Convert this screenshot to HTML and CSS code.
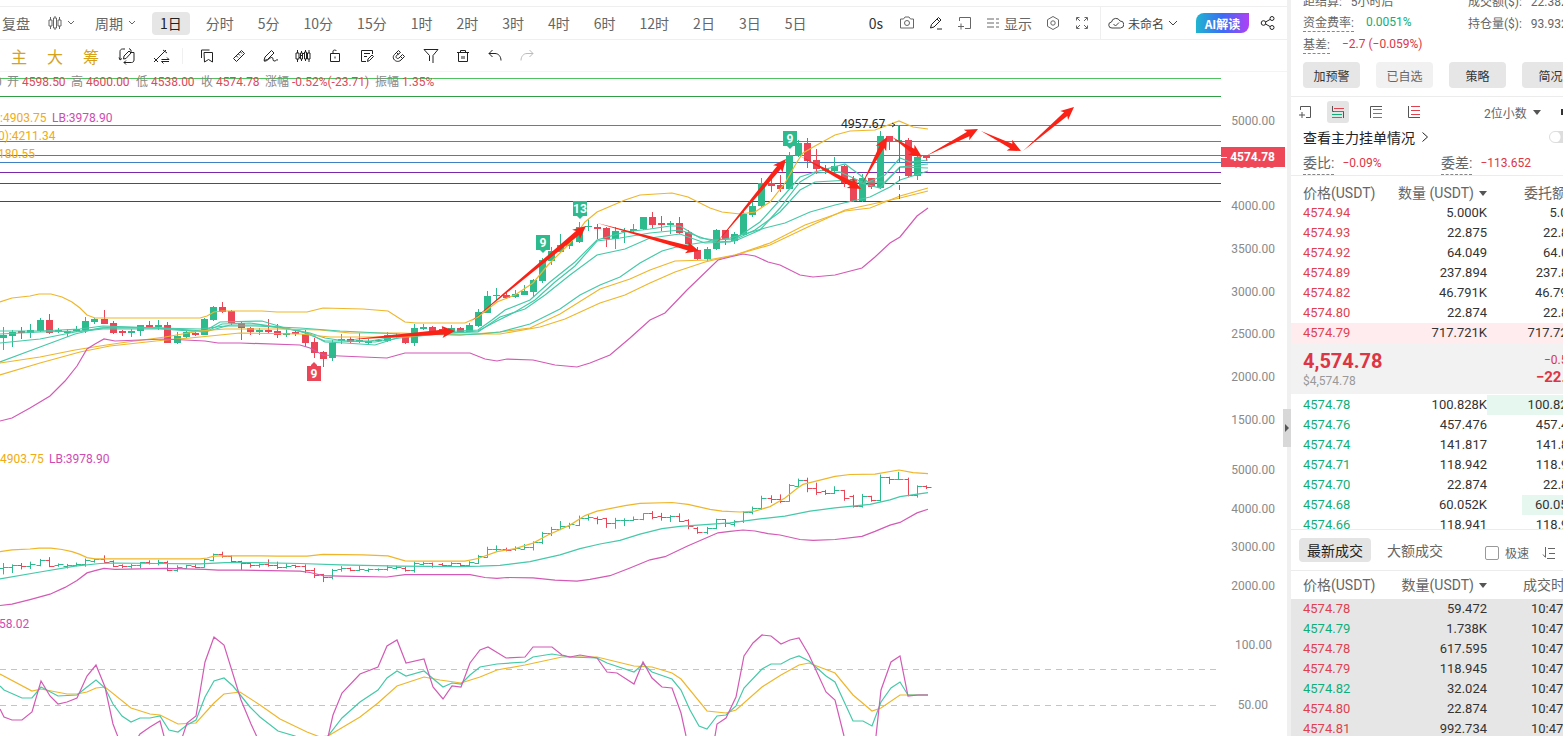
FILE: index.html
```html
<!DOCTYPE html>
<html lang="zh-CN">
<head>
    <meta charset="utf-8">
    <title>ETH/USDT 1日 K线</title>
    <link rel="stylesheet" href="styles.css">
</head>

<body>
    <main class="workspace">
        <div class="toolbar periods">
            <button class="tb replay">复盘</button>
            <button class="tb kline">
                <svg width="14" height="16" viewBox="0 0 14 16"><path d="M2.500 2v3M2.500 11v3M1 5h3v6H1zM7 1v2M7 13v2M5.500 3h3v10h-3zM11.500 2v3M11.500 11v3M10 5h3v6h-3z"/></svg>
                <svg class="chev" width="8" height="6" viewBox="0 0 8 6"><path d="M1 1l3 3 3-3"/></svg>
            </button>
            <button class="tb cycle">周期
                <svg class="chev" width="8" height="6" viewBox="0 0 8 6"><path d="M1 1l3 3 3-3"/></svg>
            </button>
            <button class="tb active">1日</button>
            <button class="tb">分时</button>
            <button class="tb">5分</button>
            <button class="tb">10分</button>
            <button class="tb">15分</button>
            <button class="tb">1时</button>
            <button class="tb">2时</button>
            <button class="tb">3时</button>
            <button class="tb">4时</button>
            <button class="tb">6时</button>
            <button class="tb">12时</button>
            <button class="tb">2日</button>
            <button class="tb">3日</button>
            <button class="tb">5日</button>
            <div class="tools">
                <span class="delay">0s</span>
                <button class="icon" aria-label="截图"><svg width="16" height="16" viewBox="0 0 16 16"><path d="M1.500 4h3l1.500-2h4l1.500 2h3v9h-13z"/><circle cx="8" cy="8" r="2.500"/></svg></button>
                <button class="icon dark" aria-label="画线"><svg width="16" height="16" viewBox="0 0 16 16"><path d="M2.500 13l1-3.500L10.500 2.500l2.500 2.500L6 12zM9 4l2.500 2.500M9 14h5"/></svg></button>
                <button class="icon" aria-label="添加"><svg width="16" height="16" viewBox="0 0 16 16"><path d="M2.500 6V2.500h11v11H8M4 8.500v6M1 11.500h6"/></svg></button>
                <button class="show">
                    <svg width="14" height="16" viewBox="0 0 14 16"><path d="M1 4h7M1 8h7M1 12h7M10 4h3M10 8h3M10 12h3"/></svg>显示
                </button>
                <button class="icon" aria-label="设置"><svg width="16" height="16" viewBox="0 0 16 16"><path d="M8 1.500l5.500 3.200v6.600L8 14.500l-5.500-3.200V4.700z"/><circle cx="8" cy="8" r="2.200"/></svg></button>
                <button class="icon" aria-label="全屏"><svg width="16" height="16" viewBox="0 0 16 16"><path d="M2.500 5.500v-3h3M10.500 2.500h3v3M13.500 10.500v3h-3M5.500 13.500h-3v-3M3 3l3 3M13 3l-3 3M13 13l-3-3M3 13l3-3"/></svg></button>
            </div>
            <div class="account">
                <button class="layout">
                    <svg width="16" height="14" viewBox="0 0 16 14"><path d="M4 12a3 3 0 0 1-.5-6A4.500 4.500 0 0 1 12 5a3.500 3.500 0 0 1 .5 7zM5.500 8l2 2 3.500-3.500"/></svg>未命名
                    <svg class="chev" width="10" height="6" viewBox="0 0 10 6"><path d="M1 1l4 4 4-4"/></svg>
                </button>
                <button class="ai">AI解读</button>
                <button class="icon dark" aria-label="分享"><svg width="16" height="16" viewBox="0 0 16 16"><circle cx="3.500" cy="8" r="2.300"/><circle cx="12" cy="3.500" r="2"/><circle cx="12" cy="12.500" r="2"/><path d="M5.500 7L10 4.500M5.500 9l4.500 2.500"/></svg></button>
            </div>
        </div>

        <div class="toolbar drawing">
            <button class="gold">主</button>
            <button class="gold">大</button>
            <button class="gold">筹</button>
            <button class="icon wide dark" aria-label="指标"><svg width="18" height="18" viewBox="0 0 18 18"><path d="M7 2H4.500C3 2 2 3 2 4.500V12M1 10.500l1 2.500 2-1.500M6 15.500h7.500c1.500 0 2.500-1 2.500-2.500V5.500h-3M11 1.500l2 1.500v2M8 13.500l-2 2 2 2M5.500 12l.5-3L11 4l2 2-5 5.500z"/></svg></button>
            <button class="icon dark" aria-label="比较"><svg width="18" height="18" viewBox="0 0 18 18"><path d="M2 15L14 3M2 11l4 4M11 3l4 3M9.500 12.500H17l-2-2M17 14.500H9.500l2 2"/></svg></button>
            <span class="sep"></span>
            <button class="icon dark" aria-label="复制"><svg width="16" height="16" viewBox="0 0 16 16"><path d="M5 4.500h8.500v9.500l-4-2.500-4 2.500zM2.500 10V2h8"/></svg></button>
            <button class="icon dark" aria-label="测量"><svg width="16" height="16" viewBox="0 0 16 16"><path d="M2.500 10.500l8-8 3 3-8 8zM5.500 8l1.500 1.500M7.500 6l1.500 1.500M9.500 4l1.500 1.500"/></svg></button>
            <button class="icon dark" aria-label="画笔"><svg width="18" height="16" viewBox="0 0 18 16"><path d="M2 12.500l1-3.500 6.500-6.500L12 5l-6.500 6.500zM2 13c3 1 6-4 8-3.500s0 3 2 3.500 2-2 4-1"/></svg></button>
            <button class="icon dark" aria-label="形态"><svg width="16" height="16" viewBox="0 0 16 16"><path d="M2.500 2v3M2.500 11v3M1 5h3v6H1zM6.500 3v2M6.500 11v2M5.500 5h2v6h-2zM10.500 2v2M10.500 11v2M9.500 4h2v7h-2zM14 2v3M14 11v3M12.500 5H15v6h-2.500zM4 10l5-5"/></svg></button>
            <button class="icon dark" aria-label="锁定"><svg width="16" height="16" viewBox="0 0 16 16"><path d="M3.500 5.500h9v8h-9zM6 5.500V3c0-1 3-1.500 3.500 0M8 8.500v2"/></svg></button>
            <button class="icon dark" aria-label="笔记"><svg width="16" height="16" viewBox="0 0 16 16"><path d="M13.500 6V2.500h-11v11H7M5 5.500h6M5 8.500h3M8.500 13.500l.5-2.500 4-4 1.500 1.500-4 4z"/></svg></button>
            <button class="icon dark" aria-label="磁吸"><svg width="16" height="16" viewBox="0 0 16 16"><path d="M7.500 2.500l-4 4c-4 4 2.500 9.500 6.500 5.500l3.500-3.500-2-2L8 10c-1.500 1.500-4-.5-2.500-2.500L9.500 4.500zM5.500 4.500l2 2M9.500 8.500l2 2"/></svg></button>
            <button class="icon dark" aria-label="筛选"><svg width="16" height="16" viewBox="0 0 16 16"><path d="M1 1.500h14L10 7.500V15M1 1.500l5.500 6V13"/></svg></button>
            <button class="icon dark" aria-label="删除"><svg width="16" height="16" viewBox="0 0 16 16"><path d="M2 4.500h12M5.500 4.500v-2h5v2M3.500 4.500v9h9v-9M7 8v3M9 8v3"/></svg></button>
            <button class="icon dark" aria-label="撤销"><svg width="16" height="16" viewBox="0 0 16 16"><path d="M5.500 2L2 5.500 5.500 9M2 5.500h6c3.500 0 6 3 6 7"/></svg></button>
            <button class="icon faded" aria-label="重做"><svg width="16" height="16" viewBox="0 0 16 16"><path d="M10.500 2L14 5.500 10.500 9M14 5.500H8c-3.500 0-6 3-6 7"/></svg></button>
        </div>

        <div class="chart">
            <svg class="plot">
                <g transform="translate(0 -72)">
                    <g id="levels"></g>
                    <g class="legend">
                        <text x="-5" y="86" class="grey">0</text>
                        <text x="7" y="86" class="grey">开 <tspan class="down">4598.50</tspan></text>
                        <text x="71" y="86" class="grey">高 <tspan class="down">4600.00</tspan></text>
                        <text x="136" y="86" class="grey">低 <tspan class="down">4538.00</tspan></text>
                        <text x="201" y="86" class="grey">收 <tspan class="down">4574.78</tspan></text>
                        <text x="265" y="86" class="grey">涨幅 <tspan class="down">-0.52%(-23.71)</tspan></text>
                        <text x="375" y="86" class="grey">振幅 <tspan class="down">1.35%</tspan></text>
                        <text x="0" y="122" class="ub">:4903.75</text>
                        <text x="52" y="122" class="lb">LB:3978.90</text>
                        <text x="-2" y="140" class="ub">0):4211.34</text>
                        <text x="-2" y="158" class="ub">180.55</text>
                        <text x="0" y="463" class="ub">4903.75</text>
                        <text x="49" y="463" class="lb">LB:3978.90</text>
                        <text x="-1" y="628" class="lb">58.02</text>
                    </g>
                    <line class="guide" x1="0" x2="100%" y1="669.500" y2="669.500"/>
                    <line class="guide" x1="0" x2="100%" y1="705.500" y2="705.500"/>
                    <g id="candles"></g>
                    <g id="curves"></g>
                    <path d="M899.500 125v33" class="cross"/>
                    <path d="M899.500 158v42" class="cross dashed"/>
                    <text x="841" y="128" class="peak">4957.67</text>
                    <path d="M892 123l3 2-3 2" class="tick"/>
                    <g id="marks"></g>
                    <g id="arrows"></g>
                </g>
            </svg>
            <svg class="axis" id="axis"></svg>
        </div>
    </main>

    <div class="splitter"><button class="handle" aria-label="收起"></button></div>

    <aside class="side">
        <section class="stats">
            <div class="stat"><span>距结算: &nbsp; 5小时后</span><span class="right">成交额($): &nbsp; 22.382亿</span></div>
            <div class="stat"><span class="dash">资金费率:</span><b class="up">0.0051%</b><span class="right">持仓量($): &nbsp; 93.932亿</span></div>
            <div class="stat"><span class="dash">基差:</span><b class="down">−2.7 (−0.059%)</b></div>
            <div class="actions">
                <button>加预警</button>
                <button class="light">已自选</button>
                <button>策略</button>
                <button>简况</button>
            </div>
        </section>

        <section class="book">
            <div class="modes">
                <button class="add" aria-label="添加"><svg width="14" height="14" viewBox="0 0 14 14"><path d="M2.500 5V1.500h10v11H8M4 7v6M1 10h6" stroke="#555"/></svg></button>
                <button class="on" aria-label="买卖盘"><svg width="14" height="14" viewBox="0 0 14 14"><path d="M1.500 1v5.500H12.500V13" stroke="#555"/><path d="M3 3.500h10M3 6.500h10" stroke="#e0414f"/><path d="M1 9.500h10M1 12.500h10" stroke="#0fae79"/></svg></button>
                <button aria-label="买盘"><svg width="14" height="14" viewBox="0 0 14 14"><path d="M13 1.500H1.500V13" stroke="#555"/><path d="M4 4.500h9M4 8.500h9M4 12.500h9" stroke="#0fae79"/></svg></button>
                <button aria-label="卖盘"><svg width="14" height="14" viewBox="0 0 14 14"><path d="M1.500 1v11.500H13" stroke="#555"/><path d="M4 1.500h9M4 5.500h9M4 9.500h9" stroke="#e0414f"/></svg></button>
                <button class="digits">2位小数 <i class="caret"></i></button>
                <i class="more"></i>
            </div>
            <div class="main-orders">
                <a href="#">查看主力挂单情况<svg width="8" height="12" viewBox="0 0 8 12"><path d="M1.500 1.500l5 4.500-5 4.500"/></svg></a>
                <label class="switch"><input type="checkbox" aria-label="主力挂单"></label>
            </div>
            <div class="ratio">
                <div><span class="dash">委比:</span><b class="down">−0.09%</b></div>
                <div><span class="dash">委差:</span><b class="down">−113.652</b></div>
            </div>
        </section>

        <section class="asks">
            <table>
                <thead><tr><th>价格(USDT)</th><th>数量 (USDT)<i class="caret"></i></th><th>委托额</th></tr></thead>
                <tbody class="sell">
                    <tr><td>4574.94</td><td>5.000K</td><td>5.00K</td></tr>
                    <tr><td>4574.93</td><td>22.875</td><td>22.875</td></tr>
                    <tr><td>4574.92</td><td>64.049</td><td>64.049</td></tr>
                    <tr><td>4574.89</td><td>237.894</td><td>237.894</td></tr>
                    <tr><td>4574.82</td><td>46.791K</td><td>46.791K</td></tr>
                    <tr><td>4574.80</td><td>22.874</td><td>22.874</td></tr>
                    <tr class="hot"><td>4574.79</td><td>717.721K</td><td>717.721K</td></tr>
                </tbody>
            </table>
        </section>

        <section class="last">
            <div><strong>4,574.78</strong><small>$4,574.78</small></div>
            <div class="change"><span>−0.52%</span><em>−22.71</em></div>
        </section>

        <section class="bids">
            <table>
                <tbody class="buy">
                    <tr><td>4574.78</td><td>100.828K</td><td class="depth full">100.828K</td></tr>
                    <tr><td>4574.76</td><td>457.476</td><td>457.476</td></tr>
                    <tr><td>4574.74</td><td>141.817</td><td>141.817</td></tr>
                    <tr><td>4574.71</td><td>118.942</td><td>118.942</td></tr>
                    <tr><td>4574.70</td><td>22.874</td><td>22.874</td></tr>
                    <tr><td>4574.68</td><td>60.052K</td><td class="depth">60.052K</td></tr>
                    <tr><td>4574.66</td><td>118.941</td><td>118.941</td></tr>
                </tbody>
            </table>
        </section>

        <section class="tabs">
            <button class="on">最新成交</button>
            <button>大额成交</button>
            <label><input type="checkbox">极速</label>
            <svg width="14" height="14" viewBox="0 0 14 14"><path d="M3.500 1v10M1 8.500l2.500 3M6 2.500h7M7 7.500h6M5 12.500h8"/></svg>
        </section>

        <section class="trades">
            <table>
                <thead><tr><th>价格(USDT)</th><th>数量(USDT)<i class="caret"></i></th><th>成交时间</th></tr></thead>
                <tbody>
                    <tr><td class="down">4574.78</td><td>59.472</td><td>10:47:32</td></tr>
                    <tr><td class="up">4574.79</td><td>1.738K</td><td>10:47:32</td></tr>
                    <tr><td class="down">4574.78</td><td>617.595</td><td>10:47:32</td></tr>
                    <tr><td class="down">4574.79</td><td>118.945</td><td>10:47:31</td></tr>
                    <tr><td class="up">4574.82</td><td>32.024</td><td>10:47:31</td></tr>
                    <tr><td class="down">4574.80</td><td>22.874</td><td>10:47:31</td></tr>
                    <tr><td class="down">4574.81</td><td>992.734</td><td>10:47:31</td></tr>
                </tbody>
            </table>
        </section>
    </aside>
    <script src="chart.js"></script>
</body>
</html>
```

FILE: styles.css
```css
* {
    box-sizing: border-box;
}

body {
    margin: 0;
    height: 100vh;
    display: flex;
    overflow: hidden;
    background: #fff;
    color: #333;
    font: 12px Roboto, "Noto Sans CJK SC", sans-serif;
}

button {
    margin: 0;
    padding: 0;
    border: 0;
    background: none;
    color: inherit;
    font: inherit;
    display: flex;
    align-items: center;
    justify-content: center;
    white-space: nowrap;
}

svg {
    flex: none;
    fill: none;
    stroke: currentColor;
}

svg text {
    stroke: none;
}

.up {
    color: #0fae79;
    fill: #0fae79;
}

.down {
    color: #dc3545;
    fill: #e0485a;
}

/* toolbars */

.workspace {
    flex: 1;
    min-width: 0;
    display: flex;
    flex-direction: column;
    padding-top: 6px;
}

.toolbar {
    flex: none;
    display: flex;
    align-items: center;
    height: 33px;
    border-top: 1px solid #efefef;
}

.periods {
    gap: 8px;
    color: #666;
    font: 14px "Noto Sans CJK SC", sans-serif;
}

.tb {
    height: 23px;
    padding: 0 8px;
    border-radius: 4px;
}

.tb.active {
    background: #e6e6e6;
    color: #222;
}

.replay {
    padding: 0 0 0 2px;
}

.kline,
.cycle {
    gap: 5px;
}

.kline {
    padding: 0 4px 0 10px;
}

.tools,
.account {
    display: flex;
    align-items: center;
}

.tools {
    margin-left: auto;
    gap: 13px;
    padding-right: 2px;
}

.delay {
    color: #333;
    margin-right: 3px;
}

.show {
    gap: 4px;
}

.dark {
    color: #222;
}

.faded {
    color: #bbb;
}

.account {
    height: 32px;
    padding: 0 11px 0 7px;
    border-left: 1px solid #efefef;
}

.layout {
    gap: 4px;
    color: #444;
    font-size: 12px;
}

.ai {
    width: 53px;
    height: 20px;
    margin: 0 11px 0 18px;
    border-radius: 8px 0 8px 0;
    background: linear-gradient(90deg, #20b5d0, #3c6cf5 50%, #b040f5);
    color: #fff;
    font-size: 12px;
    font-weight: bold;
}

.drawing {
    border-bottom: 1px solid #f4f4f4;
    padding-left: 1px;
}

.drawing .icon {
    width: 32px;
    height: 32px;
}

.drawing .wide {
    width: 36px;
}

.gold {
    width: 36px;
    color: #d6a21c;
    font: 16px "Noto Sans CJK SC", sans-serif;
}

.sep {
    width: 1px;
    height: 16px;
    margin: 0 8px 0 5px;
    background: #f0f0f0;
}

/* chart */

.chart {
    flex: 1;
    min-height: 0;
    display: flex;
}

.plot {
    flex: 1;
    min-width: 0;
    height: 100%;
}

.axis {
    width: 66px;
    height: 100%;
    fill: #8a8a8a;
}

.axis text {
    text-anchor: end;
}

.axis .price {
    fill: #fff;
    font-weight: bold;
}

.legend .grey {
    fill: #888;
}

.ub {
    fill: #efab12;
}

.lb {
    fill: #cf4bb2;
}

.guide {
    stroke: #c4c4c4;
    stroke-dasharray: 6 5;
}

.cross {
    stroke: #2f86b5;
}

.dashed {
    stroke-dasharray: 5 4;
}

.peak {
    fill: #222;
    font: 12px "Noto Sans", sans-serif;
}

.tick {
    stroke: #333;
}

.mark {
    fill: #fff;
    text-anchor: middle;
    font-weight: bold;
    font-size: 12px;
}

.splitter {
    flex: none;
    width: 4px;
    background: #f0f0f0;
    position: relative;
}

.handle {
    position: absolute;
    right: 0;
    top: 409px;
    width: 8px;
    height: 38px;
    background: #d8d8d8;
}

.handle:after {
    content: '';
    border: 4px solid transparent;
    border-left-color: #555;
    border-right: 0;
}

/* order book */

.side {
    flex: 0 0 272px;
    overflow: hidden;
    color: #666;
}

.stats {
    height: 108px;
    margin-top: -11px;
    padding-left: 12px;
    border-bottom: 1px solid #ececec;
}

.stat {
    display: flex;
    height: 22px;
    align-items: center;
    white-space: nowrap;
    gap: 12px;
}

.stat b,
.ratio b {
    font-weight: normal;
}

.stat .right {
    position: absolute;
    left: calc(100vw - 95px);
}

.dash {
    padding-bottom: 1px;
    border-bottom: 1px dashed #888;
}

.actions {
    display: flex;
    gap: 16px;
    margin-top: 7px;
}

.actions button {
    flex: none;
    width: 57px;
    height: 26px;
    border-radius: 4px;
    background: #e6e6e6;
    color: #333;
}

.actions .light {
    background: #f1f1f1;
    color: #666;
}

.book {
    height: 79px;
    border-bottom: 1px solid #ececec;
}

.modes {
    display: flex;
    align-items: center;
    gap: 16px;
    height: 30px;
    padding-left: 3px;
}

.modes button {
    flex: none;
    width: 22px;
    height: 22px;
    border-radius: 3px;
}

.modes .add {
    margin-right: -5px;
}

.modes .on {
    background: #e4e4e4;
}

.modes .digits {
    width: auto;
    gap: 6px;
    margin-left: 43px;
}

.modes .more {
    width: 4px;
    height: 6px;
    margin-left: 4px;
    background: #333;
}

.caret {
    display: inline-block;
    border: 4px solid transparent;
    border-top: 5px solid #555;
    border-bottom: 0;
    vertical-align: 2px;
}

.main-orders {
    display: flex;
    align-items: center;
    justify-content: space-between;
    height: 20px;
    padding-left: 12px;
}

.main-orders a {
    display: flex;
    align-items: center;
    gap: 6px;
    color: #222;
    font-size: 14px;
    text-decoration: none;
}

.switch {
    width: 14px;
    height: 12px;
    overflow: hidden;
}

.switch input {
    appearance: none;
    display: block;
    width: 26px;
    height: 12px;
    margin: 0;
    border: 1px solid #ddd;
    border-radius: 6px;
    background: radial-gradient(circle at 5px 5px, #fff 5px, #ddd 6px);
}

.ratio {
    display: grid;
    grid-template-columns: 138px 1fr;
    height: 28px;
    padding-left: 12px;
}

.ratio div {
    display: flex;
    align-items: center;
    gap: 8px;
}

.ratio b {
    padding-top: 4px;
}

.ratio .dash {
    font-size: 14px;
    line-height: 22px;
    padding: 4px 0 0;
}

table {
    width: 292px;
    table-layout: fixed;
    border-collapse: collapse;
}

th,
td {
    padding: 0;
    height: 20px;
    line-height: 20px;
    text-align: right;
    white-space: nowrap;
}

td {
    color: #333;
    font-size: 13px;
}

th {
    color: #666;
    font-size: 14px;
    font-weight: normal;
}

th:first-child,
td:first-child {
    width: 92px;
    padding-left: 12px;
    text-align: left;
}

th:nth-child(2),
td:nth-child(2) {
    width: 104px;
}

th:last-child {
    padding-left: 37px;
    text-align: left;
}

th .caret {
    margin-left: 5px;
}

.sell td:first-child,
td.down {
    color: #e0414f;
}

.buy td:first-child,
td.up {
    color: #0fae79;
}

.asks {
    height: 167px;
}

.asks th {
    height: 27px;
    padding-top: 7px;
}

.hot td {
    background: #feecee;
}

.last {
    display: flex;
    justify-content: space-between;
    width: 292px;
    height: 51px;
    padding: 6px 0 0 12px;
    background: #f2f2f2;
}

.last strong,
.last small,
.change span,
.change em {
    display: block;
}

.last strong {
    color: #dc3545;
    font-size: 20px;
    line-height: 24px;
}

.last small {
    color: #999;
    font-size: 12px;
    line-height: 16px;
}

.change {
    color: #dc3545;
    text-align: right;
    line-height: 22px;
}

.change em {
    font: bold 15px/12px Roboto, sans-serif;
}

.bids {
    height: 136px;
    padding-top: 1px;
    overflow: hidden;
    border-bottom: 1px solid #ececec;
}

.depth {
    background: linear-gradient(#e6f7f0, #e6f7f0) 35px 0 no-repeat;
}

.depth.full {
    background-position: 0 0;
}

.tabs {
    display: flex;
    align-items: center;
    height: 41px;
    padding-left: 8px;
    border-bottom: 1px solid #ececec;
}

.tabs button {
    height: 24px;
    padding: 0 8px;
    margin-right: 8px;
    border-radius: 4px;
    font-size: 14px;
}

.tabs .on {
    background: #e4e4e4;
    color: #222;
}

.tabs label {
    display: flex;
    align-items: center;
    gap: 6px;
    margin: 0 13px 0 26px;
    padding-top: 5px;
}

.tabs svg {
    margin-top: 5px;
}

.tabs input {
    appearance: none;
    width: 14px;
    height: 14px;
    margin: 0;
    border: 1px solid #999;
    border-radius: 2px;
}

.trades th {
    height: 28px;
}

.trades th:last-child {
    padding-left: 36px;
}

.trades tbody {
    background: #e6e6e6;
}

.trades td:last-child {
    padding-left: 44px;
    text-align: left;
}
```

FILE: chart.js
```js
(function () {
    var NS = 'http://www.w3.org/2000/svg';
    var GREEN = '#2dba8c', RED = '#eb4658', YELLOW = '#efb62a', TEAL = '#45c9a8', PINK = '#d35ab5';

    function add(id, name, attrs, text) {
        var el = document.createElementNS(NS, name);
        for (var key in attrs) {
            el.setAttribute(key, attrs[key]);
        }
        if (text) {
            el.textContent = text;
        }
        document.getElementById(id).appendChild(el);
    }

    // high, body top, body bottom, low, 1 = rising
    var candles = [
        [327,335,338,350,1],[330,332,336,347,1],[327,331,333,339,0],[324,330,333,338,1],[318,320,331,332,1],[314,320,333,334,0],
        [328,330,332,333,1],[329,331,333,337,1],[326,329,331,332,1],[317,321,330,333,1],[318,319,322,324,1],[310,319,324,324,0],
        [321,323,333,334,0],[330,331,333,336,0],[329,331,333,337,1],[325,325,331,336,1],[321,325,327,328,0],[320,325,327,330,1],
        [322,325,343,343,0],[332,336,343,344,1],[331,332,337,338,1],[330,333,335,336,0],[318,319,335,335,1],[306,307,320,321,1],
        [302,307,312,313,0],[310,311,323,325,0],[322,323,328,340,0],[327,328,332,335,0],[328,330,332,335,1],[319,330,332,333,0],
        [324,331,335,338,0],[328,333,335,337,1],[331,332,334,336,0],[330,334,343,347,0],[338,342,353,358,0],[351,352,359,367,0],
        [340,343,358,361,1],[334,339,341,344,1],[337,339,342,343,0],[333,340,342,343,1],[339,341,343,345,1],[339,340,341,342,1],
        [332,335,341,342,1],[333,335,337,339,1],[335,337,343,344,0],[324,328,343,346,1],[324,327,329,330,1],[326,327,333,335,0],
        [327,329,332,333,0],[325,328,332,333,1],[327,328,332,332,0],[323,325,332,332,1],[309,312,326,327,1],[291,296,313,313,1],
        [288,295,296,300,1],[293,295,298,299,0],[290,294,297,298,1],[285,291,295,295,1],[279,280,292,297,1],[258,260,281,283,1],
        [247,251,261,265,1],[234,245,252,252,1],[238,241,246,249,1],[222,227,242,243,1],[219,226,227,231,1],[224,227,229,239,0],
        [227,228,239,247,0],[227,231,239,249,1],[228,231,232,243,1],[224,229,231,232,1],[217,217,229,230,1],[212,217,225,228,0],
        [216,223,225,231,0],[221,223,225,234,1],[217,223,233,234,0],[230,232,244,250,0],[247,250,259,260,0],[247,249,259,261,1],
        [229,230,249,250,1],[230,230,239,245,0],[232,234,241,244,1],[212,214,235,236,1],[202,206,215,217,1],[178,183,206,207,1],
        [177,183,186,192,0],[175,185,189,192,0],[152,155,189,189,1],[140,143,156,157,1],[138,143,161,168,0],[149,160,169,174,0],
        [165,168,171,174,0],[157,166,171,172,1],[165,166,183,187,0],[176,179,201,202,0],[174,178,201,202,1],[178,178,187,189,0],
        [131,136,188,189,1],[136,136,141,150,0],[125,140,141,141,1],[138,140,176,177,0],[155,157,176,180,1],[155,156,158,161,0]
    ];

    var upper = '0,302 12,298 30,296 39,294 51,294 62,297 72,302 80,308 87,315 95,318 105,318 200,318 207,316 214,312 222,311 262,311 277,312 307,312 323,308 363,309 388,311 405,322 416,323 465,323 478,317 497,302 515,295 533,283 548,265 570,243 585,222 597,212 625,200 640,195 672,193 688,197 710,208 722,212 740,214 755,212 770,202 785,183 797,162 803,153 815,146 835,135 850,131 875,130 899,121 913,127 928,129';
    var middle = '0,362 40,347 75,334 100,328 115,327 158,328 200,329 225,326 255,326 300,328 340,331 400,334 460,335 480,334 500,332 530,324 560,309 580,295 600,285 620,277 640,263 662,251 680,246 712,241 730,238 765,228 785,223 810,212 835,205 870,197 890,187 900,180 928,171';
    var lower = '0,421 12,418 30,408 50,396 65,381 77,366 87,349 95,344 104,339 115,341 165,339 205,341 218,343 240,343 300,345 310,348 323,355 340,356 387,358 405,353 470,353 485,359 497,361 507,359 533,360 555,365 577,367 590,363 610,355 630,338 650,320 665,313 687,290 718,260 730,257 743,254 755,256 768,262 780,265 800,275 813,277 835,275 862,268 875,257 890,243 900,237 917,216 928,208';
    var averages = [
        ['0,331 40,331 80,329 103,326 160,328 205,331 220,322 262,321 285,328 310,334 325,342 345,343 375,345 400,337 440,332 478,330 492,320 505,310 530,300 550,282 575,262 597,240 625,232 650,229 670,226 680,226 700,238 715,240 735,239 760,222 780,200 800,177 815,172 845,164 860,175 868,182 885,175 900,158 910,162 928,160', TEAL],
        ['0,334 40,332 80,331 103,328 160,328 205,332 222,324 250,323 285,328 310,333 325,338 345,341 375,342 400,338 440,334 478,331 495,322 515,312 535,300 555,282 575,266 597,241 620,238 650,233 680,230 700,237 715,242 735,241 760,230 780,208 800,182 815,173 840,172 862,182 885,182 900,167 928,164', TEAL],
        ['0,343 40,339 75,332 103,329 160,329 205,332 230,325 260,325 300,331 325,341 370,341 400,336 440,333 478,332 500,317 525,309 545,295 570,275 597,255 625,249 650,238 680,234 705,243 730,242 755,230 780,212 800,190 815,182 850,180 880,188 900,167 928,168', TEAL],
        ['0,363 40,357 75,350 100,346 120,343 165,337 200,331 225,329 280,329 320,330 350,333 400,333 460,335 500,332 530,328 560,314 600,289 630,279 650,270 675,261 708,260 735,255 770,243 805,225 845,211 870,208 900,196 928,188', YELLOW],
        ['0,375 40,363 80,352 110,346 165,340 190,338 240,333 300,334 330,337 400,337 440,334 500,334 540,327 565,319 600,303 625,295 650,283 675,272 705,262 735,255 770,245 810,226 845,210 900,198 928,191', YELLOW]
    ];
    var kdj = [
        ['0,674 32,691 41,689 67,694 77,694 87,692 96,688 105,687 131,708 150,714 160,715 178,724 196,723 214,703 224,694 240,692 260,705 280,719 307,732 320,737 328,736 360,717 378,703 397,686 424,677 440,680 461,683 480,677 497,670 525,665 562,657 597,657 634,666 652,667 672,673 681,679 707,711 726,713 736,710 762,687 781,675 799,665 809,663 835,673 853,695 872,711 881,708 900,695 928,695', YELLOW],
        ['0,686 4,690 22,698 32,698 41,687 58,696 77,695 87,687 96,680 105,688 113,704 122,716 131,722 140,718 150,718 160,716 169,730 178,732 187,725 196,720 205,697 214,681 224,678 233,686 250,707 260,717 278,731 295,736 310,745 328,736 342,718 360,702 378,690 387,678 397,671 406,676 424,671 443,687 452,683 461,684 470,675 480,667 497,664 525,662 533,657 552,654 570,657 597,658 607,663 634,672 643,664 652,672 672,679 681,690 690,710 699,726 707,729 717,716 726,715 736,706 744,688 762,669 771,664 781,664 790,659 799,656 809,661 826,676 835,682 853,721 863,721 872,726 881,702 891,688 900,682 908,695 928,695', TEAL],
        ['0,709 4,717 12,720 22,720 32,712 41,681 50,696 58,704 67,702 77,698 87,676 96,665 105,687 113,724 118,737 130,750 140,734 150,727 160,721 165,740 182,738 187,723 196,716 205,662 214,637 224,645 241,700 251,724 257,737 290,780 328,737 333,715 342,693 360,674 378,667 387,646 397,640 406,663 424,659 433,687 443,699 452,686 461,687 470,663 480,650 488,647 506,658 525,657 533,647 552,647 562,655 570,657 580,655 597,658 607,672 617,673 634,684 643,662 652,678 662,687 672,688 681,713 686,736 700,790 715,736 717,724 726,718 736,697 744,656 753,643 762,635 771,636 781,644 790,640 799,638 809,655 826,692 835,700 844,736 860,790 876,736 881,690 891,662 900,656 908,696 918,695 928,695', PINK]
    ];

    // same prices on the scale of the second pane
    function sub(y) {
        return 470 + (y - 121) * 0.4515;
    }

    function subPoints(points) {
        return points.split(' ').map(function (p) {
            var xy = p.split(',');
            return xy[0] + ',' + sub(+xy[1]).toFixed(1);
        }).join(' ');
    }

    function curve(points, color) {
        add('curves', 'polyline', { points: points, stroke: color, 'stroke-width': 1.2 });
    }

    [[78, '#4fc35f'], [96, '#2f9e44'], [125, '#b751a8'], [141, '#b751a8'], [155, '#3f82c4'], [162, '#3f82c4'],
     [172, '#7a2aa8'], [183, '#7a2aa8'], [201, '#5f2ca8']].forEach(function (l) {
        add('levels', 'line', { x1: 0, x2: '100%', y1: l[0] + 0.5, y2: l[0] + 0.5, stroke: l[1] });
    });

    candles.forEach(function (c, i) {
        var x = 3.5 + i * 9.137;
        var color = c[4] ? GREEN : RED;
        var open = Math.round(sub(c[4] ? c[2] : c[1])) + 0.5;
        var close = Math.round(sub(c[4] ? c[1] : c[2])) + 0.5;
        var mid = Math.floor(x) + 0.5;
        add('candles', 'path', { d: 'M' + mid + ' ' + c[0] + 'V' + c[3], stroke: color });
        add('candles', 'rect', { x: mid - 3.5, y: c[1], width: 7, height: Math.max(1, c[2] - c[1]), fill: color, stroke: 'none' });
        add('candles', 'path', {
            d: 'M' + (mid - 4) + ' ' + open + 'H' + mid + 'M' + mid + ' ' + sub(c[0]) + 'V' + (sub(c[3]) + 1) + 'M' + mid + ' ' + close + 'h5',
            stroke: color
        });
    });

    averages.forEach(function (a) { curve(a[0], a[1]); });
    [[upper, YELLOW], [middle, TEAL], [lower, PINK]].forEach(function (b) {
        curve(b[0], b[1]);
        curve(subPoints(b[0]), b[1]);
    });
    kdj.forEach(function (k) { curve(k[0], k[1]); });

    [[543, 242, '9', 1], [580, 208, '13', 1], [790, 138, '9', 1], [314, 373, '9', 0]].forEach(function (m) {
        var color = m[3] ? GREEN : RED;
        var tip = m[3] ? 'v2l-3 3-3-3v-2z' : 'v-2l-3-3-3 3v2z';
        add('marks', 'rect', { x: m[0] - 7, y: m[1] - 7, width: 14, height: 15, fill: color, stroke: 'none' });
        add('marks', 'path', { d: 'M' + (m[0] + 3) + ' ' + (m[1] + (m[3] ? 6 : -6)) + tip, fill: color, stroke: 'none' });
        add('marks', 'text', { x: m[0], y: m[1] + 5, 'class': 'mark' }, m[2]);
    });

    [[345, 340, 455, 331], [468, 324, 586, 226], [597, 223, 699, 251], [714, 246, 786, 159], [800, 156, 861, 189],
     [862, 184, 887, 137], [892, 137, 922, 157], [926, 156, 978, 129], [981, 131, 1021, 151], [1023, 151, 1074, 107]].forEach(function (a) {
        var angle = Math.atan2(a[3] - a[1], a[2] - a[0]);
        var length = Math.sqrt(Math.pow(a[2] - a[0], 2) + Math.pow(a[3] - a[1], 2));
        add('arrows', 'path', {
            d: 'M0 0L' + (length - 11) + ' -2.5L' + (length - 13) + ' -6L' + length + ' 0L' + (length - 13) + ' 6L' + (length - 11) + ' 2.5z',
            transform: 'translate(' + a[0] + ' ' + a[1] + ') rotate(' + angle * 180 / Math.PI + ')',
            fill: '#fa2216',
            stroke: 'none'
        });
    });

    [[121, '5000.00'], [164, '4500.00'], [206, '4000.00'], [249, '3500.00'], [292, '3000.00'], [334, '2500.00'],
     [377, '2000.00'], [420, '1500.00'], [470, '5000.00'], [509, '4000.00'], [547, '3000.00'], [586, '2000.00'],
     [645, '100.00'], [705, '50.00']].forEach(function (t) {
        // the short labels of the last pane are centred under the others
        add('axis', 'text', { x: t[1] === '50.00' ? 47 : t[1] === '100.00' ? 51 : 54, y: t[0] - 68 }, t[1]);
    });
    add('axis', 'rect', { x: 0, y: 75, width: 64, height: 20, fill: '#ee4858', stroke: 'none' });
    add('axis', 'path', { d: 'M0 85.5h6', stroke: '#fff' });
    add('axis', 'text', { x: 54, y: 89, 'class': 'price' }, '4574.78');
})();
```
